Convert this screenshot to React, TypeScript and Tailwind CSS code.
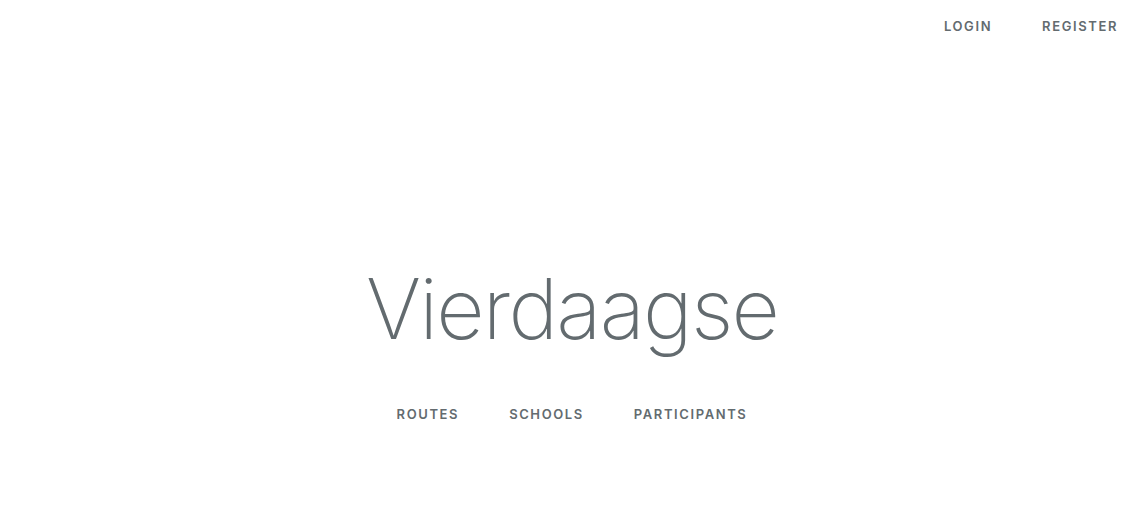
const navLink = "px-[25px] text-[13px] font-semibold uppercase tracking-[0.1rem] text-[#636b6f] no-underline";

export default function App() {
  return (
    <div className="flex h-[523px] w-full flex-col bg-white font-['Inter',sans-serif] text-[#636b6f]">
      <div className="flex justify-end pt-[17px] pr-[1px]">
        <a href="#" className={navLink}>Login</a>
        <a href="#" className={navLink}>Register</a>
      </div>

      <div className="flex flex-col items-center pt-[224px]">
        <div className="text-[84px] font-extralight leading-[96px] tracking-[-1.8px]">Vierdaagse</div>
        <div className="mt-[48px] flex">
          <a href="#" className={navLink}>Routes</a>
          <a href="#" className={navLink}>Schools</a>
          <a href="#" className={navLink}>Participants</a>
        </div>
      </div>
    </div>
  );
}
